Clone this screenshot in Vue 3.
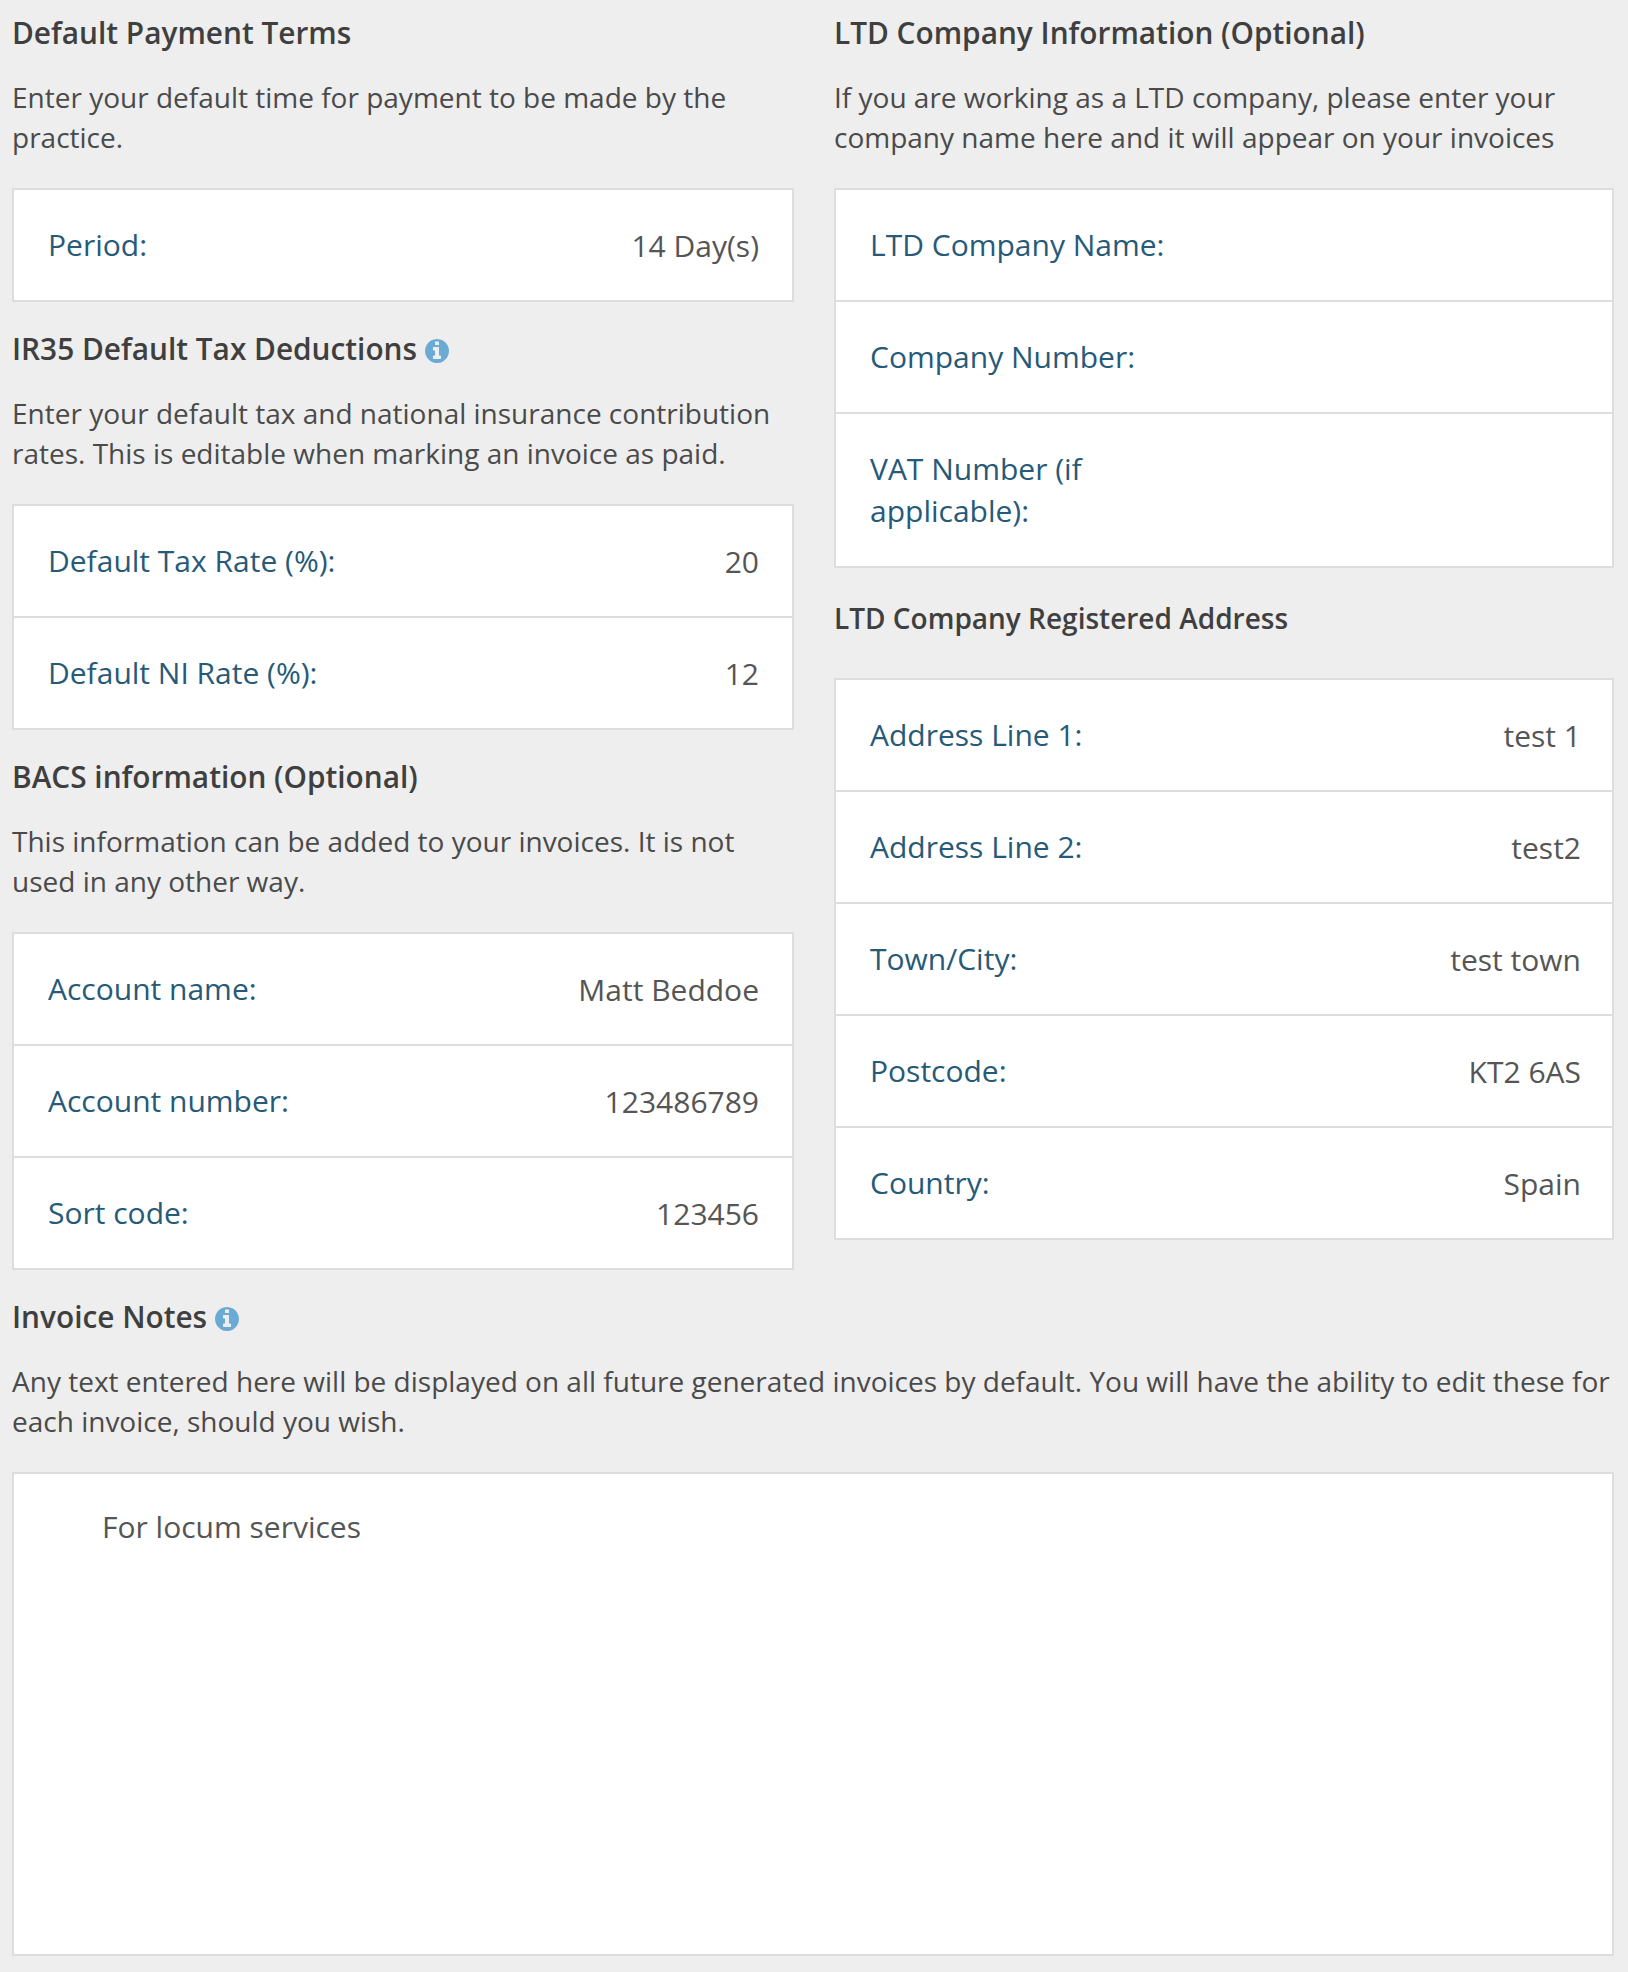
<script setup>
const terms = [{ label: 'Period:', value: '14 Day(s)' }]
const tax = [
  { label: 'Default Tax Rate (%):', value: '20' },
  { label: 'Default NI Rate (%):', value: '12' }
]
const bacs = [
  { label: 'Account name:', value: 'Matt Beddoe' },
  { label: 'Account number:', value: '123486789' },
  { label: 'Sort code:', value: '123456' }
]
const company = [
  { label: 'LTD Company Name:', value: '' },
  { label: 'Company Number:', value: '' },
  { label: 'VAT Number (if applicable):', value: '' }
]
const address = [
  { label: 'Address Line 1:', value: 'test 1' },
  { label: 'Address Line 2:', value: 'test2' },
  { label: 'Town/City:', value: 'test town' },
  { label: 'Postcode:', value: 'KT2 6AS' },
  { label: 'Country:', value: 'Spain' }
]
const infoPath = 'M1024 1248v-160q0-14-9-23t-23-9h-96v-512q0-14-9-23t-23-9h-320q-14 0-23 9t-9 23v160q0 14 9 23t23 9h96v320h-96q-14 0-23 9t-9 23v160q0 14 9 23t23 9h448q14 0 23-9t9-23zm-128-896v-160q0-14-9-23t-23-9h-192q-14 0-23 9t-9 23v160q0 14 9 23t23 9h192q14 0 23-9t9-23zm640 416q0 209-103 385.5t-279.5 279.5-385.5 103-385.5-103-279.5-279.5-103-385.5 103-385.5 279.5-279.5 385.5-103 385.5 103 279.5 279.5 103 385.5z'
</script>

<template>
  <div class="page">
    <div class="columns">
      <div class="col">
        <h3>Default Payment Terms</h3>
        <p>Enter your default time for payment to be made by the practice.</p>
        <div class="box">
          <div v-for="r in terms" :key="r.label" class="row">
            <span class="label">{{ r.label }}</span><span class="value">{{ r.value }}</span>
          </div>
        </div>

        <h3>IR35 Default Tax Deductions <svg class="info" viewBox="0 0 1536 1536"><path :d="infoPath" /></svg></h3>
        <p>Enter your default tax and national insurance contribution rates. This is editable when marking an invoice as paid.</p>
        <div class="box">
          <div v-for="r in tax" :key="r.label" class="row">
            <span class="label">{{ r.label }}</span><span class="value">{{ r.value }}</span>
          </div>
        </div>

        <h3>BACS information (Optional)</h3>
        <p>This information can be added to your invoices. It is not used in any other way.</p>
        <div class="box">
          <div v-for="r in bacs" :key="r.label" class="row">
            <span class="label">{{ r.label }}</span><span class="value">{{ r.value }}</span>
          </div>
        </div>
      </div>

      <div class="col right">
        <h3>LTD Company Information (Optional)</h3>
        <p>If you are working as a LTD company, please enter your company name here and it will appear on your invoices</p>
        <div class="box">
          <div v-for="r in company" :key="r.label" class="row">
            <span class="label">{{ r.label }}</span><span class="value">{{ r.value }}</span>
          </div>
        </div>

        <h4>LTD Company Registered Address</h4>
        <div class="box">
          <div v-for="r in address" :key="r.label" class="row">
            <span class="label">{{ r.label }}</span><span class="value">{{ r.value }}</span>
          </div>
        </div>
      </div>
    </div>

    <h3>Invoice Notes <svg class="info" viewBox="0 0 1536 1536"><path :d="infoPath" /></svg></h3>
    <p>Any text entered here will be displayed on all future generated invoices by default. You will have the ability to edit these for each invoice, should you wish.</p>
    <div class="notes">For locum services</div>
  </div>
</template>

<style>
html, body {
  background: #eeeeee;
}
</style>

<style scoped>
.page {
  box-sizing: border-box;
  height: 1972px;
  padding: 11px 14px 0 12px;
  background: #eeeeee;
  font-family: "Open Sans", sans-serif;
  font-size: 28px;
  line-height: 40px;
  color: #4a4a4a;
}
.columns {
  display: grid;
  grid-template-columns: 782px 780px;
  column-gap: 40px;
}
h3 {
  margin: 0 0 23px;
  font-size: 29.8px;
  line-height: 43px;
  font-weight: 600;
  color: #3f3f3f;
}
h4 {
  margin: 30px 0 40px;
  font-size: 28px;
  line-height: 40px;
  font-weight: 600;
  color: #3f3f3f;
}
p {
  margin: 0 0 31px;
}
.box {
  background: #fff;
  border: 2px solid #dddddd;
  margin-bottom: 25px;
}
.row {
  display: flex;
  justify-content: space-between;
  align-items: center;
  padding: 34px 33px 34px 34px;
  font-size: 30px;
  line-height: 42px;
  border-bottom: 2px solid #dddddd;
}
.row:last-child {
  border-bottom: none;
}
.right .row {
  padding-right: 31px;
}
.label {
  flex: 0 0 auto;
  max-width: 340px;
  color: #265a78;
}
.value {
  position: relative;
  top: 1px;
  color: #555555;
}
.info {
  width: 24px;
  height: 24px;
  vertical-align: -3px;
  fill: #6aaad5;
}
.notes {
  box-sizing: border-box;
  height: 484px;
  padding: 32px 88px;
  background: #fff;
  border: 2px solid #dddddd;
  font-size: 30px;
  line-height: 42px;
  color: #555555;
}
</style>
